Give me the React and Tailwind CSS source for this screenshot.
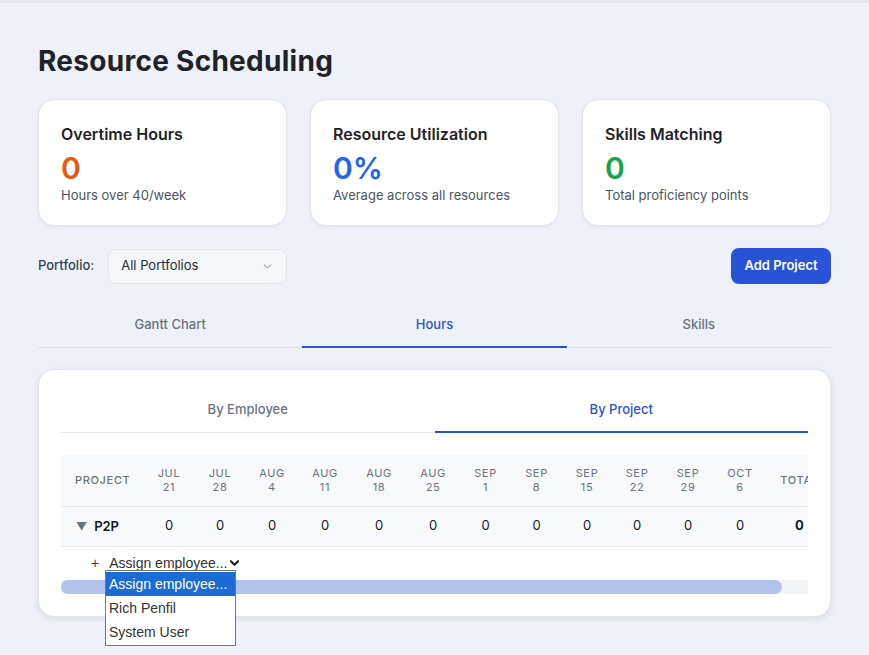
import React, { useState } from "react";

const weeks = [
  ["JUL", "21", "w-[50px]"],
  ["JUL", "28", "w-[52px]"],
  ["AUG", "4", "w-[52px]"],
  ["AUG", "11", "w-[54px]"],
  ["AUG", "18", "w-[54px]"],
  ["AUG", "25", "w-[54px]"],
  ["SEP", "1", "w-[51px]"],
  ["SEP", "8", "w-[51px]"],
  ["SEP", "15", "w-[50px]"],
  ["SEP", "22", "w-[50px]"],
  ["SEP", "29", "w-[52px]"],
  ["OCT", "6", "w-[52px]"],
];

const stats = [
  { title: "Overtime Hours", value: "0", color: "text-[#ea580c]", sub: "Hours over 40/week" },
  { title: "Resource Utilization", value: "0%", color: "text-[#2563eb]", sub: "Average across all resources" },
  { title: "Skills Matching", value: "0", color: "text-[#16a34a]", sub: "Total proficiency points" },
];

const heading = { fontFamily: "Inter, 'Noto Sans', sans-serif" };

function Chevron({ className = "" }) {
  return (
    <svg viewBox="0 0 10 6" className={className} fill="none" stroke="currentColor" strokeLinecap="round" strokeLinejoin="round">
      <path d="M1 1l4 4 4-4" />
    </svg>
  );
}

export default function App() {
  const [tab, setTab] = useState("Hours");
  const [view, setView] = useState("By Project");

  return (
    <div className="min-h-[655px] bg-[#eef1f8] font-['Inter','Noto_Sans',sans-serif] text-[#111827]">
      <div className="h-[3px] bg-[#e4e7ee]" />
      <div className="px-[38px] pt-[40px] pb-10">
        <h1 style={heading} className="text-[28px] leading-[36px] font-bold tracking-[0.01em] text-[#1f2328]">
          Resource Scheduling
        </h1>

        {/* stat cards */}
        <div className="mt-[20px] grid grid-cols-3 gap-[23px]">
          {stats.map((s) => (
            <div key={s.title} className="h-[127px] rounded-2xl border border-[#e3e6ee] bg-white px-[22px] pt-[22px] shadow-[0_1px_3px_rgba(20,30,60,0.06)]">
              <div style={heading} className="text-base leading-6 font-semibold text-[#1f2328]">{s.title}</div>
              <div style={heading} className={`mt-[5px] text-[30px] leading-[34px] font-semibold ${s.color}`}>{s.value}</div>
              <div className="text-[13px] leading-5 text-[#4b5563]">{s.sub}</div>
            </div>
          ))}
        </div>

        {/* filter row */}
        <div className="mt-[22px] flex h-[36px] items-center justify-between">
          <div className="flex items-center gap-[14px]">
            <span className="text-[13px] font-medium text-[#374151]">Portfolio:</span>
            <div className="flex h-[35px] w-[179px] items-center justify-between rounded-lg border border-[#e3e6ec] bg-[#f5f6f9] pl-3 pr-[14px] text-[13px] text-[#1f2937]">
              <span>All Portfolios</span>
              <Chevron className="h-[5px] w-[9px] text-[#6b7280]" />
            </div>
          </div>
          <button className="h-[36px] w-[100px] rounded-lg bg-[#2853d9] text-[13px] font-semibold text-white">
            Add Project
          </button>
        </div>

        {/* main tabs */}
        <div className="mt-[19px] grid grid-cols-3 border-b border-[#dfe2e8]">
          {["Gantt Chart", "Hours", "Skills"].map((t) => (
            <button
              key={t}
              onClick={() => setTab(t)}
              className={
                tab === t
                  ? "-mb-px h-[45px] border-b-2 border-[#2853d9] text-[13px] font-medium text-[#2853d9]"
                  : "h-[44px] text-[13px] font-medium text-[#6b7280]"
              }
            >
              {t}
            </button>
          ))}
        </div>

        {/* hours card */}
        <div className="relative mt-[21px] rounded-2xl border border-[#e3e6ee] bg-white px-[22px] pt-[18px] pb-[22px] shadow-[0_2px_6px_rgba(20,30,60,0.10)]">
          <div className="grid grid-cols-2 border-b border-[#e2e5ea]">
            {["By Employee", "By Project"].map((t) => (
              <button
                key={t}
                onClick={() => setView(t)}
                className={
                  view === t
                    ? "-mb-px h-[45px] border-b-2 border-[#2853d9] text-[13px] font-medium text-[#2853d9]"
                    : "h-[44px] text-[13px] font-medium text-[#6b7280]"
                }
              >
                {t}
              </button>
            ))}
          </div>

          <div className="mt-[22px] overflow-hidden">
            <table className="w-[772px] table-fixed border-collapse">
              <thead>
                <tr className="h-[51px] bg-[#f8f9fb] text-[11px] leading-[14px] tracking-[0.06em] text-[#6b7280]">
                  <th className="w-[83px] pl-[14px] text-left font-medium">PROJECT</th>
                  {weeks.map(([m, d, w]) => (
                    <th key={m + d} className={`${w} text-center font-normal`}>
                      <div>{m}</div>
                      <div>{d}</div>
                    </th>
                  ))}
                  <th className="w-[67px] text-center font-medium">TOTAL</th>
                </tr>
              </thead>
              <tbody>
                <tr className="h-[40px] border-y border-[#e5e7eb] bg-[#f8f9fb] text-[13px]">
                  <td className="pl-[15px]">
                    <span className="inline-flex items-center gap-[7px]">
                      <span className="text-[11px] text-[#6b7280]">▼</span>
                      <span className="font-semibold text-[#111827]">P2P</span>
                    </span>
                  </td>
                  {weeks.map(([m, d]) => (
                    <td key={m + d} className="text-center">0</td>
                  ))}
                  <td className="text-center font-bold">0</td>
                </tr>
                <tr className="h-[34px]">
                  <td colSpan={14} className="pl-[30px] align-top pt-[3px]">
                    <span className="inline-flex items-center gap-[10px] font-['Liberation_Sans',Arial,sans-serif] text-[14px] leading-[18px] text-[#333]">
                      <span className="text-[#2b3f77]">+</span>
                      <span className="inline-flex items-center gap-[3px]">
                        Assign employee...
                        <Chevron className="h-[6px] w-[9px] stroke-[2.4] text-[#222]" />
                      </span>
                    </span>
                  </td>
                </tr>
              </tbody>
            </table>
          </div>
          {/* horizontal scrollbar */}
          <div className="h-[14px] bg-[#f3f4f6]">
            <div className="h-full w-[721px] rounded-full bg-[#b4c3ee]" />
          </div>

          {/* open native select list */}
          <div className="absolute left-[66px] top-[200px] w-[131px] border border-[#767676] bg-white py-px font-['Liberation_Sans',Arial,sans-serif] text-[14px] text-[#333]">
            <div className="h-[24px] bg-[#1a6bd4] pl-[3px] leading-[24px] text-white">Assign employee...</div>
            <div className="h-[24px] pl-[3px] leading-[24px]">Rich Penfil</div>
            <div className="h-[24px] pl-[3px] leading-[24px]">System User</div>
          </div>
        </div>
      </div>
    </div>
  );
}
